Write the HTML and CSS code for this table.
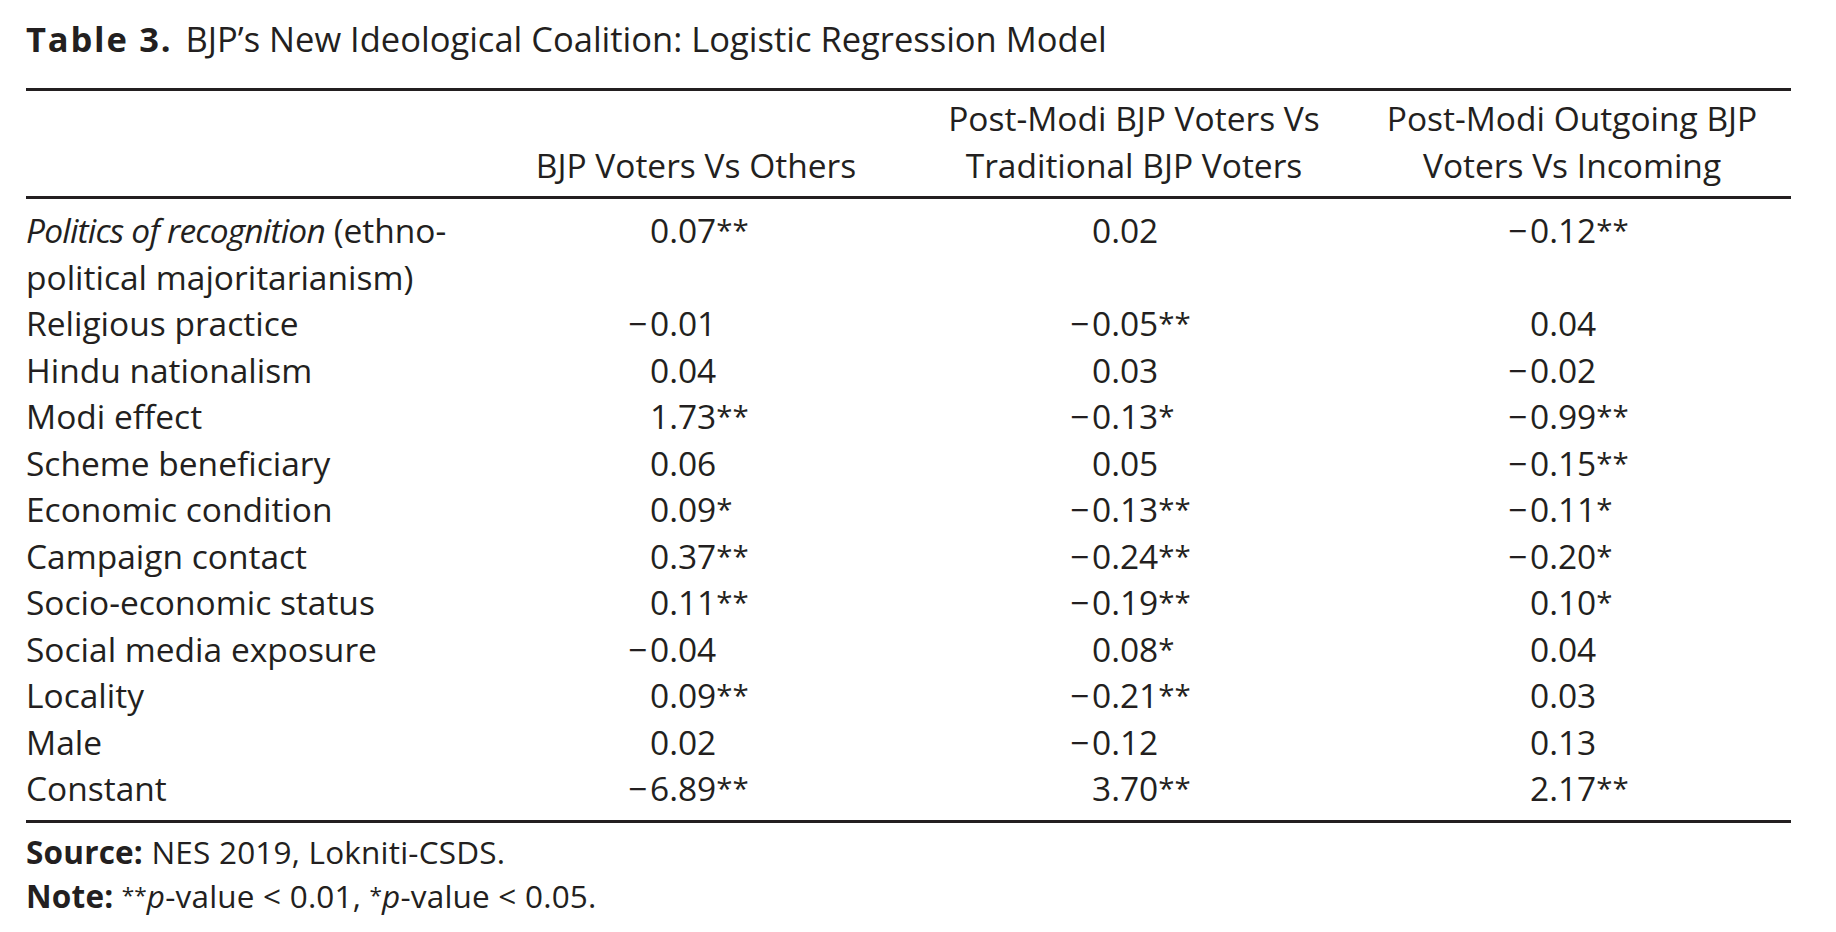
FILE: index.html
```html
<!DOCTYPE html>
<html lang="en">
<head>
<meta charset="utf-8">
<title>Table 3. BJP’s New Ideological Coalition</title>
<link rel="stylesheet" href="styles.css">
</head>
<body>
<div class="page">
  <h1 class="caption"><span class="tno">Table 3.</span>BJP’s New Ideological Coalition: Logistic Regression Model</h1>
  <table class="reg">
    <colgroup>
      <col class="c-label"><col class="c-data"><col class="c-data"><col class="c-data">
    </colgroup>
    <thead>
      <tr>
        <th class="h-label"></th>
        <th>BJP Voters Vs Others</th>
        <th>Post-Modi BJP Voters Vs<br>Traditional BJP Voters</th>
        <th>Post-Modi Outgoing BJP<br>Voters Vs Incoming</th>
      </tr>
    </thead>
    <tbody>
      <tr class="first">
        <td class="lab"><i>Politics of recognition</i> (ethno-<br>political majoritarianism)</td>
        <td class="n1">0.07<span class="st">**</span></td>
        <td class="n2">0.02</td>
        <td class="n3"><span class="neg">−</span>0.12<span class="st">**</span></td>
      </tr>
      <tr>
        <td class="lab">Religious practice</td>
        <td class="n1"><span class="neg">−</span>0.01</td>
        <td class="n2"><span class="neg">−</span>0.05<span class="st">**</span></td>
        <td class="n3">0.04</td>
      </tr>
      <tr>
        <td class="lab">Hindu nationalism</td>
        <td class="n1">0.04</td>
        <td class="n2">0.03</td>
        <td class="n3"><span class="neg">−</span>0.02</td>
      </tr>
      <tr>
        <td class="lab">Modi effect</td>
        <td class="n1">1.73<span class="st">**</span></td>
        <td class="n2"><span class="neg">−</span>0.13<span class="st">*</span></td>
        <td class="n3"><span class="neg">−</span>0.99<span class="st">**</span></td>
      </tr>
      <tr>
        <td class="lab">Scheme beneficiary</td>
        <td class="n1">0.06</td>
        <td class="n2">0.05</td>
        <td class="n3"><span class="neg">−</span>0.15<span class="st">**</span></td>
      </tr>
      <tr>
        <td class="lab">Economic condition</td>
        <td class="n1">0.09<span class="st">*</span></td>
        <td class="n2"><span class="neg">−</span>0.13<span class="st">**</span></td>
        <td class="n3"><span class="neg">−</span>0.11<span class="st">*</span></td>
      </tr>
      <tr>
        <td class="lab">Campaign contact</td>
        <td class="n1">0.37<span class="st">**</span></td>
        <td class="n2"><span class="neg">−</span>0.24<span class="st">**</span></td>
        <td class="n3"><span class="neg">−</span>0.20<span class="st">*</span></td>
      </tr>
      <tr>
        <td class="lab">Socio-economic status</td>
        <td class="n1">0.11<span class="st">**</span></td>
        <td class="n2"><span class="neg">−</span>0.19<span class="st">**</span></td>
        <td class="n3">0.10<span class="st">*</span></td>
      </tr>
      <tr>
        <td class="lab">Social media exposure</td>
        <td class="n1"><span class="neg">−</span>0.04</td>
        <td class="n2">0.08<span class="st">*</span></td>
        <td class="n3">0.04</td>
      </tr>
      <tr>
        <td class="lab">Locality</td>
        <td class="n1">0.09<span class="st">**</span></td>
        <td class="n2"><span class="neg">−</span>0.21<span class="st">**</span></td>
        <td class="n3">0.03</td>
      </tr>
      <tr>
        <td class="lab">Male</td>
        <td class="n1">0.02</td>
        <td class="n2"><span class="neg">−</span>0.12</td>
        <td class="n3">0.13</td>
      </tr>
      <tr class="last">
        <td class="lab">Constant</td>
        <td class="n1"><span class="neg">−</span>6.89<span class="st">**</span></td>
        <td class="n2">3.70<span class="st">**</span></td>
        <td class="n3">2.17<span class="st">**</span></td>
      </tr>
    </tbody>
  </table>
  <div class="notes">
    <p><b>Source:</b> NES 2019, Lokniti-CSDS.</p>
    <p><b>Note:</b> <span class="fst">**</span><i>p</i>-value &lt; 0.01, <span class="fst">*</span><i>p</i>-value &lt; 0.05.</p>
  </div>
</div>
</body>
</html>
```

FILE: styles.css
```css
html, body {
  margin: 0;
  padding: 0;
  background: #ffffff;
}

body {
  font-family: "Open Sans", Lato, "DejaVu Sans", sans-serif;
  color: #231f20;
}

.page {
  padding: 16px 0 0 26px;
  width: 1765px;
}

.caption {
  margin: 0;
  font-size: 34.5px;
  line-height: 46px;
  font-weight: 400;
}

.caption .tno {
  font-weight: 700;
  letter-spacing: 1.8px;
  margin-right: 13px;
}

.reg {
  margin-top: 26px;
  width: 1765px;
  border-collapse: collapse;
  table-layout: fixed;
  font-size: 33.5px;
  line-height: 46.5px;
  border-top: 3px solid #231f20;
  border-bottom: 3px solid #231f20;
}

.c-label { width: 451px; }
.c-data { width: 438px; }

.reg thead th {
  font-weight: 400;
  text-align: center;
  vertical-align: bottom;
  padding: 4px 0 8px;
  border-bottom: 3px solid #231f20;
}

.reg td {
  padding: 0;
  vertical-align: top;
  white-space: nowrap;
}

.reg td.lab i {
  letter-spacing: -0.8px;
}

.reg tr.first td { padding-top: 8px; }
.reg tr.last td { padding-bottom: 8px; }

.reg td.n1 { padding-left: 173px; }
.reg td.n2 { padding-left: 177px; }
.reg td.n3 { padding-left: 177px; }

.neg {
  display: inline-block;
  width: 22px;
  margin-left: -22px;
}

.st {
  font-size: 0.88em;
  line-height: 1;
  vertical-align: 0.08em;
}

.notes {
  margin-top: 7px;
  font-size: 31.5px;
  line-height: 44px;
  letter-spacing: 0.2px;
}

.notes p {
  margin: 0;
}

.fst {
  font-size: 0.72em;
  line-height: 1;
  vertical-align: 0.22em;
  letter-spacing: 0;
}
```
